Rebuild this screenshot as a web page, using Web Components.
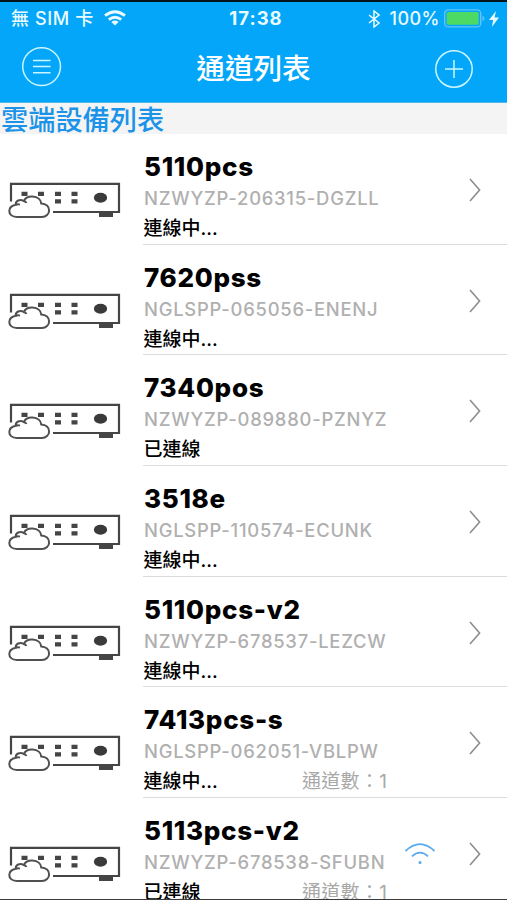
<!DOCTYPE html>
<html lang="zh-Hant">
<head>
<meta charset="utf-8">
<title>通道列表</title>
<style>
  html, body { margin: 0; height: 100%; overflow: hidden; }
  body {
    background: #fff;
    font-family: Inter, "Noto Sans CJK TC", sans-serif;
  }
</style>
</head>
<body>
<channel-app>
  <status-bar slot="top" carrier="無 SIM 卡" time="17:38" battery="100%"></status-bar>
  <nav-bar slot="top">通道列表</nav-bar>
  <section-title>雲端設備列表</section-title>
  <device-row name="5110pcs" uid="NZWYZP-206315-DGZLL" status="連線中..."></device-row>
  <device-row name="7620pss" uid="NGLSPP-065056-ENENJ" status="連線中..."></device-row>
  <device-row name="7340pos" uid="NZWYZP-089880-PZNYZ" status="已連線"></device-row>
  <device-row name="3518e" uid="NGLSPP-110574-ECUNK" status="連線中..."></device-row>
  <device-row name="5110pcs-v2" uid="NZWYZP-678537-LEZCW" status="連線中..."></device-row>
  <device-row name="7413pcs-s" uid="NGLSPP-062051-VBLPW" status="連線中..." channels="1"></device-row>
  <device-row name="5113pcs-v2" uid="NZWYZP-678538-SFUBN" status="已連線" channels="1" wifi></device-row>
</channel-app>

<script>
class ChannelApp extends HTMLElement {
  constructor() {
    super();
    this.attachShadow({ mode: 'open' });
    this.shadowRoot.innerHTML = `
      <style>
        :host {
          display: block;
          box-sizing: border-box;
          height: 900px;
          overflow: hidden;
          border-bottom: 1px solid #3c3c3c;
        }
        header {
          box-sizing: border-box;
          height: 103px;
          background: #04a6f9;
          border-top: 2px solid #03141f;
          border-bottom: 1px solid #4fb7ec;
        }
      </style>
      <header><slot name="top"></slot></header>
      <slot></slot>
    `;
  }
}

class StatusBar extends HTMLElement {
  connectedCallback() {
    this.attachShadow({ mode: 'open' });
    this.shadowRoot.innerHTML = `
      <style>
        :host {
          display: grid;
          grid-template-columns: 1fr auto 1fr;
          align-items: center;
          height: 32px;
          padding: 0 8px 0 11px;
          color: #e9fbff;
          font-size: 18px;
          font-weight: 500;
          line-height: 33px;
          white-space: nowrap;
        }
        .side { display: flex; align-items: center; }
        .end { justify-content: flex-end; }
        .carrier { letter-spacing: .6px; }
        .time { font-weight: 700; font-size: 18.5px; letter-spacing: 1px; margin-left: 2px; }
        .wifi { margin: 0 0 2px 10px; }
        .pct { margin: 0 4px 0 9px; letter-spacing: .5px; }
        .bolt { margin-left: 4px; }
        svg { display: block; flex: none; }
      </style>
      <div class="side">
        <span class="carrier">${this.getAttribute('carrier')}</span>
        <svg class="wifi" width="22" height="16" viewBox="0 0 22 16" fill="none" stroke="currentColor" stroke-width="3">
          <path d="M1 5.6Q11-2.2 21 5.6M4.8 9.6Q11 4.8 17.2 9.6"/>
          <path d="M7.4 11.9Q11 9 14.6 11.9L11 15.6Z" fill="currentColor" stroke="none"/>
        </svg>
      </div>
      <div class="time">${this.getAttribute('time')}</div>
      <div class="side end">
        <svg width="12" height="18" viewBox="0 0 12 18" fill="none" stroke="currentColor" stroke-width="1.5">
          <path d="M1 5L11 13L6 17V1L11 5L1 13"/>
        </svg>
        <span class="pct">${this.getAttribute('battery')}</span>
        <svg width="41" height="19" viewBox="0 0 41 19">
          <rect x=".7" y=".9" width="36" height="17" rx="3.5" fill="none" stroke="#62c5f7" stroke-width="1.4"/>
          <rect x="2.7" y="3" width="32" height="12.8" rx="1.5" fill="#4cd964"/>
          <path d="M38.5 6.5Q40.3 7.5 40.3 9.4T38.5 12.3Z" fill="#62c5f7"/>
        </svg>
        <svg class="bolt" width="10" height="16" viewBox="0 0 10 16">
          <path d="M7 0L0 9H4.2L2.8 16L10 6.6H5.6Z" fill="currentColor"/>
        </svg>
      </div>
    `;
  }
}

class NavBar extends HTMLElement {
  constructor() {
    super();
    this.attachShadow({ mode: 'open' });
    this.shadowRoot.innerHTML = `
      <style>
        :host {
          display: flex;
          align-items: center;
          justify-content: space-between;
          height: 66px;
          padding: 0 33px 0 21px;
          color: #fff;
        }
        h1 {
          margin: 3px 0 0 11px;
          font-size: 28.6px;
          font-weight: 500;
          line-height: 40px;
        }
        svg { display: block; fill: none; stroke: #c9f6ff; stroke-width: 1.5; }
        .menu { margin-bottom: 1px; }
        .add { margin-top: 3px; }
      </style>
      <svg class="menu" width="41" height="40" viewBox="0 0 41 40">
        <circle cx="20.6" cy="19.6" r="18.9"/>
        <path d="M12 13.4H29.6M12 19.6H29.6M12 25.8H29.6"/>
      </svg>
      <h1><slot></slot></h1>
      <svg class="add" width="40" height="40" viewBox="0 0 40 40">
        <circle cx="20" cy="20" r="18.2"/>
        <path d="M11 20H29M20 11V29"/>
      </svg>
    `;
  }
}

class SectionTitle extends HTMLElement {
  constructor() {
    super();
    this.attachShadow({ mode: 'open' });
    this.shadowRoot.innerHTML = `
      <style>
        :host {
          display: block;
          height: 31px;
          padding-left: 1px;
          background: #f4f4f4;
          color: #1b93e8;
          font-size: 27.2px;
          font-weight: 500;
          line-height: 35px;
        }
      </style>
      <slot></slot>
    `;
  }
}

class DeviceRow extends HTMLElement {
  connectedCallback() {
    this.attachShadow({ mode: 'open' });
    this.render();
  }

  render() {
    const channels = this.getAttribute('channels');
    this.shadowRoot.innerHTML = `
      <style>
        :host {
          display: grid;
          grid-template-columns: 143px 1fr;
          height: 110.65px;
        }
        .device { display: block; margin: 47px 0 0 8px; }
        .body {
          display: grid;
          grid-template-columns: 1fr 32px 70px;
          box-sizing: border-box;
          border-bottom: 1.5px solid #dcdcdc;
          padding: 17px 0 0 1px;
          white-space: nowrap;
        }
        .name {
          font-size: 26px;
          font-weight: 800;
          line-height: 31px;
          letter-spacing: .7px;
          color: #000;
        }
        .uid {
          font-size: 18.4px;
          font-weight: 500;
          line-height: 32px;
          letter-spacing: .75px;
          color: #b0b0b0;
        }
        .meta {
          display: grid;
          grid-template-columns: 158px 1fr;
          font-size: 19px;
          line-height: 29px;
        }
        .status { font-weight: 500; color: #000; margin-left: -.5px; }
        .count { color: #a8a8a8; letter-spacing: .3px; }
        .wifi { margin: 27px 0 0 -1px; }
        .chevron { margin: 26px 0 0 31px; }
        svg { display: block; }
      </style>
      <svg class="device" width="114" height="38" viewBox="0 0 114 38">
        <path d="M3 20.5V2.8H111V31H45" fill="none" stroke="#454545" stroke-width="2.2"/>
        <path d="M91 31H105V36H91Z" fill="#454545"/>
        <path d="M13.5 10.7H19.5V15H13.5ZM30 10.7H36V15H30ZM47 10.7H53V15H47ZM63.5 10.7H69.5V15H63.5ZM47 18.3H53V22.5H47ZM63.5 18.3H69.5V22.5H63.5Z" fill="#454545"/>
        <ellipse cx="92.5" cy="16.8" rx="6.6" ry="5" fill="#3a3a3a"/>
        <path d="M9 36C3.5 36 1.3 33 1.3 30C1.3 26.4 4 24.6 7.8 23.8C7.2 19.8 12 17.6 15.8 20C17.4 16.6 21 15.4 24.5 15.6C29.8 16 33 19 33.2 22.4C38 22.7 41.1 25.6 41.1 29.4C41.1 33 38 36 34 36Z" fill="#fff" stroke="#505050" stroke-width="2"/>
        <path d="M7.8 23.8Q9.7 22.8 12 23.6M15.6 20Q17.8 20.4 18.5 22" fill="none" stroke="#505050" stroke-width="1.8"/>
      </svg>
      <div class="body">
        <div>
          <div class="name">${this.getAttribute('name')}</div>
          <div class="uid">${this.getAttribute('uid')}</div>
          <div class="meta">
            <span class="status">${this.getAttribute('status')}</span>
            ${channels ? `<span class="count">通道數：${channels}</span>` : ''}
          </div>
        </div>
        <div>${this.hasAttribute('wifi') ? this.wifiIcon() : ''}</div>
        <svg class="chevron" width="14" height="26" viewBox="0 0 14 26" fill="none" stroke="#8a8e93" stroke-width="1.6">
          <path d="M2 2L11.6 13L2 24"/>
        </svg>
      </div>
    `;
  }

  wifiIcon() {
    return `
      <svg class="wifi" width="32" height="24" viewBox="0 0 32 24" fill="none" stroke="#58a9ee" stroke-width="1.8">
        <path d="M1.5 9Q16-4.8 30.5 9M8 14.3Q16 7 24 14.3"/>
        <circle cx="16" cy="20.5" r="1.5" fill="#58a9ee" stroke="none"/>
      </svg>`;
  }
}

customElements.define('channel-app', ChannelApp);
customElements.define('status-bar', StatusBar);
customElements.define('nav-bar', NavBar);
customElements.define('section-title', SectionTitle);
customElements.define('device-row', DeviceRow);
</script>
</body>
</html>
